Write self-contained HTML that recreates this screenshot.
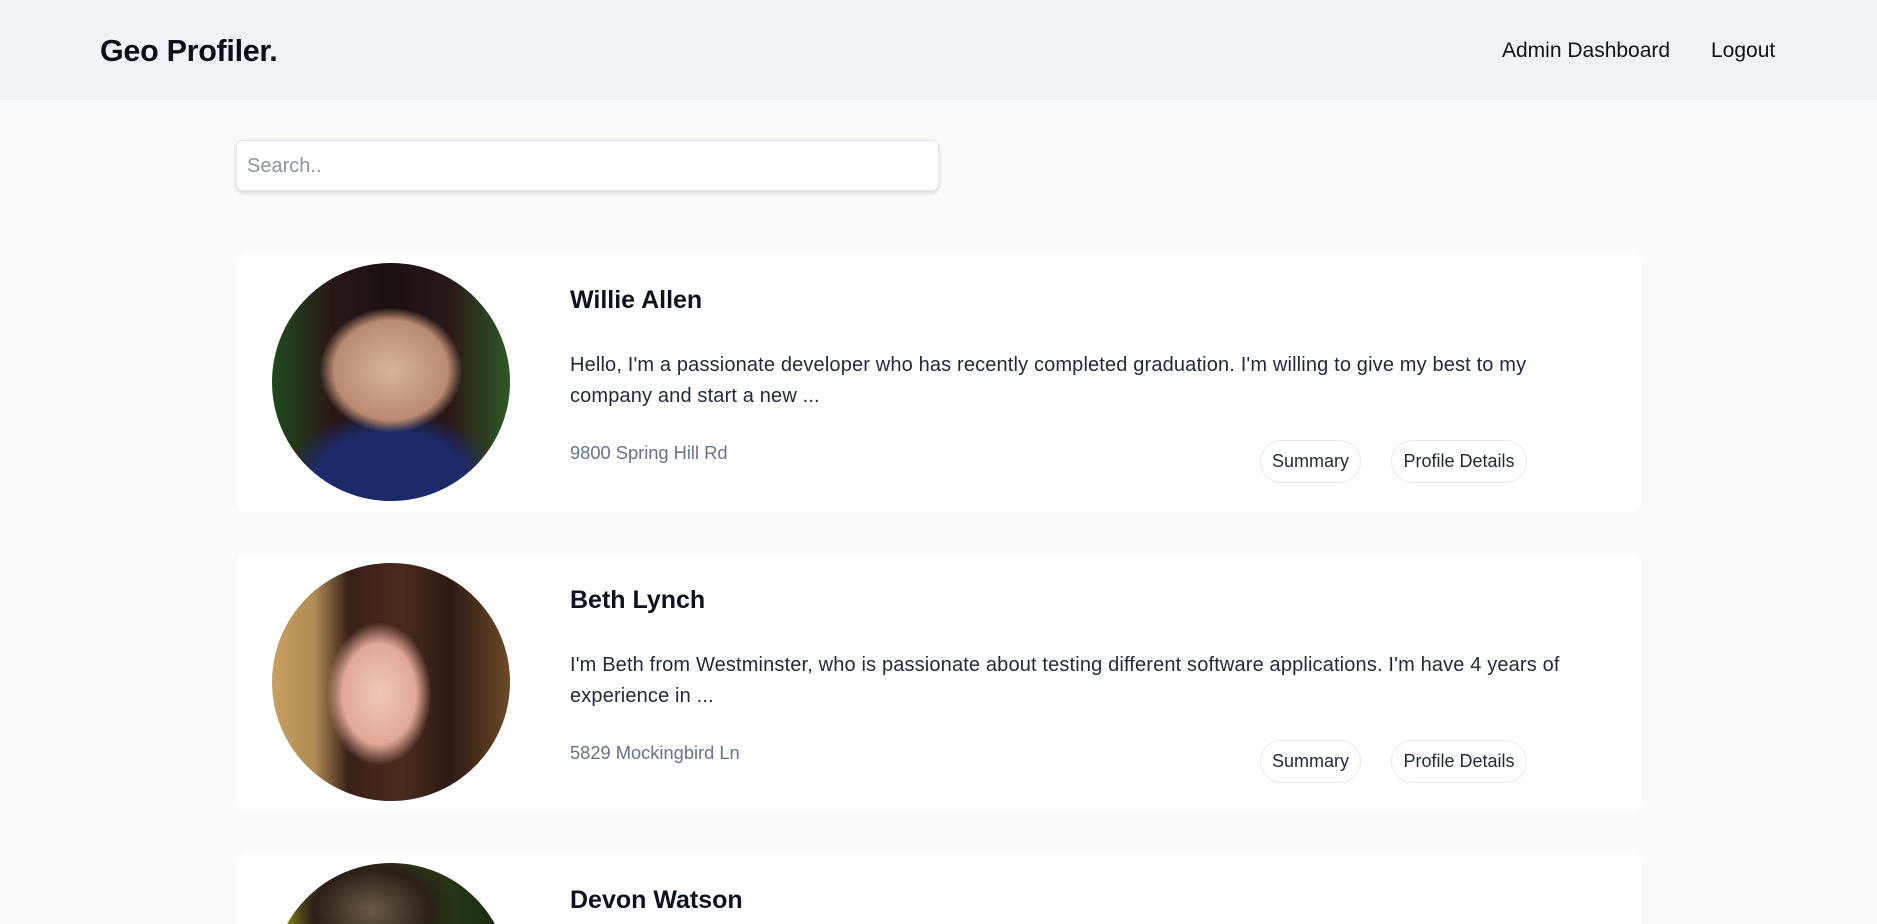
<!DOCTYPE html>
<html><head><meta charset="utf-8"><style>
*{margin:0;padding:0;box-sizing:border-box}
html,body{width:1877px;height:924px;overflow:hidden}
body{background:#f8fafc;font-family:"Liberation Sans",sans-serif;color:#0f172a;position:relative}
.hdr{position:absolute;left:0;top:0;width:1877px;height:100px;background:#f0f3f8}
.logo{position:absolute;left:100px;top:34px;font-size:30.5px;font-weight:bold;color:#0b0f19;letter-spacing:-0.3px}
.nav{position:absolute;top:39px;font-size:21px;color:#111}
.search{position:absolute;left:236px;top:140px;width:703px;height:51px;background:#fff;border:1px solid #e2e8f0;border-radius:7px;box-shadow:0 2px 5px rgba(0,0,0,.15);font-size:20px;color:#8a94a4;padding:14px 10px}
.card{position:absolute;left:236px;width:1405px;height:259px;background:#fff;border-radius:11px;overflow:hidden}
.av{position:absolute;left:36px;top:10px;width:238px;height:238px;border-radius:50%}
.name{position:absolute;left:334px;top:33px;font-size:25px;font-weight:bold;color:#0b1220}
.bio{position:absolute;left:334px;top:97px;width:1025px;font-size:20px;letter-spacing:0.15px;line-height:31px;color:#1e293b}
.addr{position:absolute;left:334px;top:189px;font-size:18.3px;color:#64748b}
.btn{position:absolute;top:187px;height:43px;border:1px solid #e2e8f0;border-radius:22px;font-size:18px;color:#1e293b;text-align:center;line-height:41px}
</style></head><body>
<div class="hdr">
<div class="logo">Geo Profiler.</div>
<div class="nav" style="left:1502px">Admin Dashboard</div>
<div class="nav" style="left:1711px">Logout</div>
</div>
<div class="search">Search..</div>

<div class="card" style="top:253px">
<div class="av" style="background:radial-gradient(ellipse 40% 35% at 50% 45%,#d9b49a 0%,#b98a72 60%,transparent 75%),radial-gradient(ellipse 45% 30% at 50% 92%,#1d2a6a 0%,#1d2a6a 70%,transparent 100%),linear-gradient(90deg,#1f4a1c 0%,#2a1818 25%,#1a1010 50%,#2a1818 75%,#2f5a26 100%)"></div>
<div class="name">Willie Allen</div>
<div class="bio">Hello, I'm a passionate developer who has recently completed graduation. I'm willing to give my best to my company and start a new ...</div>
<div class="addr">9800 Spring Hill Rd</div>
<div class="btn" style="left:1024px;width:101px">Summary</div>
<div class="btn" style="left:1155px;width:136px">Profile Details</div>
</div>

<div class="card" style="top:553px">
<div class="av" style="background:radial-gradient(ellipse 22% 30% at 45% 55%,#f0c8b8 0%,#e2a898 70%,transparent 100%),linear-gradient(90deg,#c9a060 0%,#b08a55 18%,#3a2018 32%,#4a2a1e 55%,#2e1a14 75%,#6e4a28 100%)"></div>
<div class="name">Beth Lynch</div>
<div class="bio">I'm Beth from Westminster, who is passionate about testing different software applications. I'm have 4 years of experience in ...</div>
<div class="addr">5829 Mockingbird Ln</div>
<div class="btn" style="left:1024px;width:101px">Summary</div>
<div class="btn" style="left:1155px;width:136px">Profile Details</div>
</div>

<div class="card" style="top:853px;height:71px;border-radius:11px 11px 0 0">
<div class="av" style="background:radial-gradient(ellipse 35% 25% at 42% 20%,#6a5a48 0%,#2a2018 70%,transparent 100%),linear-gradient(90deg,#8a8a20 0%,#3a3a18 30%,#2a3a18 60%,#1a2a10 100%)"></div>
<div class="name">Devon Watson</div>
</div>
</body></html>
